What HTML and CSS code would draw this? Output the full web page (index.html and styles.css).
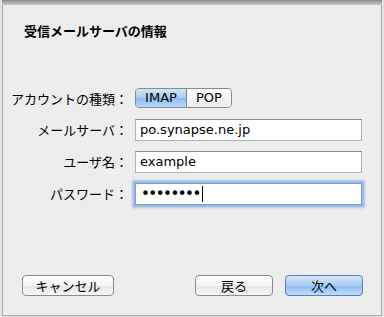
FILE: index.html
```html
<!DOCTYPE html>
<html lang="ja">
<head>
    <meta charset="UTF-8">
    <meta name="viewport" content="width=device-width, initial-scale=1.0">
    <title>受信メールサーバの情報</title>
    <link rel="stylesheet" href="styles.css">
</head>
<body>
    <div class="frame">
        <div class="topbar"></div>
        <h2 class="title">受信メールサーバの情報</h2>

        <div class="form">
            <div class="label">アカウントの種類：</div>
            <div class="segmented">
                <span class="seg selected">IMAP</span>
                <span class="seg">POP</span>
            </div>

            <div class="label">メールサーバ：</div>
            <div class="field">po.synapse.ne.jp</div>

            <div class="label">ユーザ名：</div>
            <div class="field">example</div>

            <div class="label">パスワード：</div>
            <div class="field focused"><span class="dots">••••••••</span><span class="caret"></span></div>
        </div>

        <div class="buttons">
            <button class="btn cancel">キャンセル</button>
            <div class="spacer"></div>
            <button class="btn">戻る</button>
            <button class="btn primary">次へ</button>
        </div>
    </div>
</body>
</html>
```

FILE: styles.css
```css
/* General Styles */
body {
    margin: 0;
    width: 384px;
    height: 317px;
    background-color: #e4e4e4;
    font-family: "DejaVu Sans", "Noto Sans CJK JP", sans-serif;
    font-size: 13px;
    color: #000;
    overflow: hidden;
}

.frame {
    box-sizing: border-box;
    width: 380px;
    height: 316px;
    margin: 0 2px;
    background-color: #ededed;
    border: 1px solid #a9a9a9;
    border-top: none;
    display: flex;
    flex-direction: column;
}

.topbar {
    height: 5px;
    background: linear-gradient(#8e8e8e, #c9c9c9);
    margin: 0 -1px;
}

.title {
    margin: 17px 0 0 21px;
    font-family: "Noto Sans CJK JP", sans-serif;
    font-size: 13px;
    font-weight: bold;
    line-height: 18px;
}

.form {
    margin-top: 48px;
    display: grid;
    grid-template-columns: 125px 227px;
    column-gap: 7px;
    row-gap: 10px;
    align-items: center;
}

.label {
    text-align: right;
    font-family: "Noto Sans CJK JP", sans-serif;
    line-height: 18px;
}

.segmented {
    display: flex;
    width: 97px;
    height: 20px;
    box-sizing: border-box;
    border: 1px solid #8a8a8a;
    border-radius: 4px;
    overflow: hidden;
    margin-bottom: 1px;
}

.seg {
    flex: 1;
    text-align: center;
    line-height: 18px;
    background: linear-gradient(#ffffff, #ececec);
}

.seg.selected {
    flex: 0 0 50px;
    border-right: 1px solid #7a8aa0;
    background: linear-gradient(#d4e4f8, #a9c9f0 50%, #8dbbef 51%, #b7d6f7);
}

.field {
    box-sizing: border-box;
    height: 22px;
    padding: 0 4px;
    line-height: 20px;
    background-color: #fff;
    border: 1px solid #b3b3b3;
    border-top-color: #8c8c8c;
    display: flex;
    align-items: center;
}

.field.focused {
    border-color: #7d9ccb;
    box-shadow: 0 0 0 2px #9cbde8, 0 0 2px 3px rgba(120, 160, 220, 0.5);
}

.dots {
    font-size: 15px;
    letter-spacing: -1.5px;
    padding-left: 1px;
}

.caret {
    display: inline-block;
    width: 1px;
    height: 16px;
    background-color: #000;
    margin-left: 2px;
}

.buttons {
    margin-top: auto;
    padding: 0 18px 19px 19px;
    display: flex;
    gap: 12px;
}

.spacer {
    flex: 1;
}

.btn {
    box-sizing: border-box;
    width: 78px;
    height: 21px;
    padding: 0;
    font-family: "Noto Sans CJK JP", sans-serif;
    font-size: 13px;
    color: #000;
    border: 1px solid #8d8d8d;
    border-radius: 4px;
    background: linear-gradient(#ffffff, #f3f3f3 50%, #e6e6e6 51%, #f6f6f6);
    line-height: 19px;
}

.btn.cancel {
    width: 92px;
}

.btn.primary {
    border-color: #5f7fae;
    background: linear-gradient(#d6e7fb, #a9cbf2 50%, #8bbaf0 51%, #bfdcfa);
}
```
